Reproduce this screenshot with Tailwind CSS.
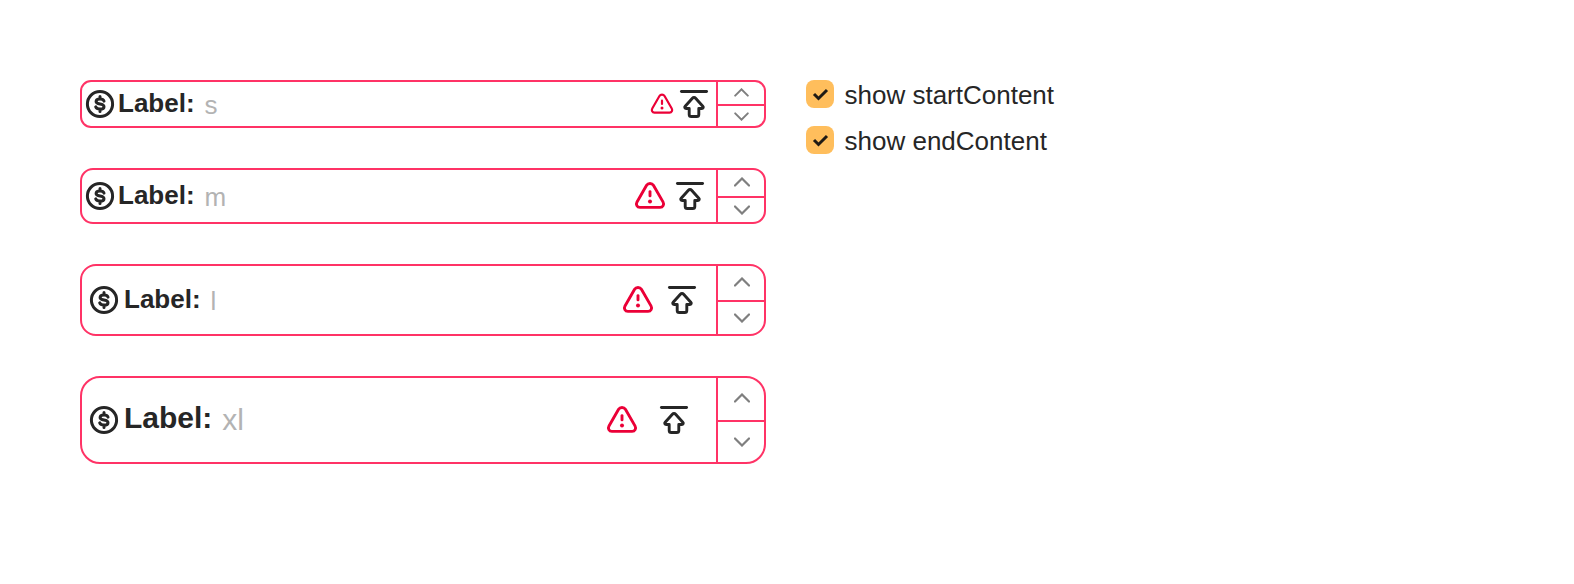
<!DOCTYPE html>
<html lang="en">
<head>
<meta charset="utf-8">
<title>Number input sizes</title>
<script src="https://cdn.jsdelivr.net/npm/@tailwindcss/browser@4"></script>
</head>
<body class="bg-white text-[#262626] antialiased" style="font-family:'Liberation Sans',Arial,sans-serif">
<svg class="hidden">
  <symbol id="dollar" viewBox="0 0 32 32"><g fill="none" stroke="#262626" stroke-width="3"><circle cx="16" cy="16" r="12.6"/><path d="M20 13.100C19.500 11.600 18 11 16 11c-2.400 0-3.900 1-3.900 2.400 0 1.700 1.600 2.200 3.900 2.600 2.400.4 4 1 4 2.700 0 1.600-1.600 2.400-4 2.400-2.200 0-3.800-.8-4.300-2.300M16 8.600v2.400M16 21.100v2.500" stroke-linecap="round"/></g></symbol>
  <symbol id="warn" viewBox="0 0 32 32"><g fill="none" stroke="#eb0037" stroke-width="2.900"><path d="M12.600 5.300 3 21.900c-1.500 2.600.1 5.500 2.900 5.500h20.200c2.800 0 4.400-2.900 2.900-5.500L19.400 5.300c-1.500-2.500-5.300-2.500-6.800 0z"/><path d="M16 11.600v4.300" stroke-linecap="round"/></g><circle cx="16" cy="21.400" r="2" fill="#eb0037"/></symbol>
  <symbol id="top" viewBox="0 0 32 32"><g fill="none" stroke="#262626" stroke-width="2.900" stroke-linecap="round" stroke-linejoin="round"><path d="M3.450 3.450h25.100"/><path d="M14.400 10.200 7.200 18.200c-1 1.100-.4 2.300 1 2.300h3v5.900c0 1.300.8 2.100 2.100 2.100h5.400c1.300 0 2.100-.8 2.100-2.100v-5.900h3c1.400 0 2-1.200 1-2.300l-7.200-8c-.9-1-2.300-1-3.200 0z"/></g></symbol>
  <symbol id="up" viewBox="0 0 16 10"><path d="M1 8.500 8 1.500l7 7" fill="none" stroke="#7f7f7f" stroke-width="2.200" stroke-linecap="round"/></symbol>
  <symbol id="down" viewBox="0 0 16 10"><path d="M1 1.500l7 7 7-7" fill="none" stroke="#7f7f7f" stroke-width="2.200" stroke-linecap="round"/></symbol>
</svg>
<main class="flex gap-10 p-20">
  <div class="flex w-[686px] shrink-0 flex-col gap-10">
    <div class="flex h-12 overflow-hidden rounded-[11px] border-2 border-[#ff3366]">
      <div class="flex flex-1 items-center pr-1.5 pl-0.5">
        <svg class="size-8"><use href="#dollar"/></svg>
        <div class="ml-0.5 pb-0.5 text-[26px] leading-8 font-bold">Label:</div>
        <div class="ml-2.5 pt-0.5 text-[26px] leading-8 text-[#b3b3b3]">s</div>
        <svg class="ml-auto size-6"><use href="#warn"/></svg>
        <svg class="ml-1 size-8"><use href="#top"/></svg>
      </div>
      <div class="flex w-12 flex-col border-l-2 border-[#ff3366]">
        <div class="flex h-1/2 items-center justify-center"><svg class="h-[9px] w-[15px] -translate-y-px"><use href="#up"/></svg></div>
        <div class="flex h-1/2 items-center justify-center border-t-2 border-[#ff3366]"><svg class="h-[9px] w-[15px]"><use href="#down"/></svg></div>
      </div>
    </div>
    <div class="flex h-14 overflow-hidden rounded-[13px] border-2 border-[#ff3366]">
      <div class="flex flex-1 items-center pr-2.5 pl-0.5">
        <svg class="size-8"><use href="#dollar"/></svg>
        <div class="ml-0.5 pb-0.5 text-[26px] leading-8 font-bold">Label:</div>
        <div class="ml-2.5 pt-0.5 text-[26px] leading-8 text-[#b3b3b3]">m</div>
        <svg class="ml-auto size-8"><use href="#warn"/></svg>
        <svg class="ml-2 size-8"><use href="#top"/></svg>
      </div>
      <div class="flex w-12 flex-col border-l-2 border-[#ff3366]">
        <div class="flex h-1/2 items-center justify-center pl-0.5"><svg class="h-[10px] w-4 -translate-y-px"><use href="#up"/></svg></div>
        <div class="flex h-1/2 items-center justify-center border-t-2 border-[#ff3366] pl-0.5"><svg class="h-[10px] w-4"><use href="#down"/></svg></div>
      </div>
    </div>
    <div class="flex h-[72px] overflow-hidden rounded-2xl border-2 border-[#ff3366]">
      <div class="flex flex-1 items-center pr-[18px] pl-1.5">
        <svg class="size-8"><use href="#dollar"/></svg>
        <div class="ml-1 pb-0.5 text-[26px] leading-8 font-bold">Label:</div>
        <div class="ml-2.5 pt-0.5 text-[26px] leading-8 text-[#b3b3b3]">l</div>
        <svg class="ml-auto size-8"><use href="#warn"/></svg>
        <svg class="ml-3 size-8"><use href="#top"/></svg>
      </div>
      <div class="flex w-12 flex-col border-l-2 border-[#ff3366]">
        <div class="flex h-1/2 items-center justify-center pl-0.5"><svg class="h-[10px] w-4 -translate-y-px"><use href="#up"/></svg></div>
        <div class="flex h-1/2 items-center justify-center border-t-2 border-[#ff3366] pl-0.5"><svg class="h-[10px] w-4"><use href="#down"/></svg></div>
      </div>
    </div>
    <div class="flex h-[88px] overflow-hidden rounded-[20px] border-2 border-[#ff3366]">
      <div class="flex flex-1 items-center pr-[26px] pl-1.5">
        <svg class="size-8"><use href="#dollar"/></svg>
        <div class="ml-1 pb-1 text-[30px] leading-9 font-bold">Label:</div>
        <div class="ml-2.5 text-[30px] leading-9 text-[#b3b3b3]">xl</div>
        <svg class="ml-auto size-8"><use href="#warn"/></svg>
        <svg class="ml-5 size-8"><use href="#top"/></svg>
      </div>
      <div class="flex w-12 flex-col border-l-2 border-[#ff3366]">
        <div class="flex h-1/2 items-center justify-center pl-0.5"><svg class="h-[10px] w-4 -translate-y-px"><use href="#up"/></svg></div>
        <div class="flex h-1/2 items-center justify-center border-t-2 border-[#ff3366] pl-0.5"><svg class="h-[10px] w-4"><use href="#down"/></svg></div>
      </div>
    </div>
  </div>
  <div class="flex flex-col gap-3.5">
    <label class="flex h-8 gap-[10.500px]">
      <span class="flex size-7 items-center justify-center rounded-lg bg-[#ffbe5c]"><svg class="size-7" viewBox="0 0 28 28"><path d="m8 14 4.500 4.500 8.500-8.500" fill="none" stroke="#1f1a14" stroke-width="3"/></svg></span>
      <span class="-mt-px text-[26px] leading-8">show startContent</span>
    </label>
    <label class="flex h-8 gap-[10.500px]">
      <span class="flex size-7 items-center justify-center rounded-lg bg-[#ffbe5c]"><svg class="size-7" viewBox="0 0 28 28"><path d="m8 14 4.500 4.500 8.500-8.500" fill="none" stroke="#1f1a14" stroke-width="3"/></svg></span>
      <span class="-mt-px text-[26px] leading-8">show endContent</span>
    </label>
  </div>
</main>
</body>
</html>
